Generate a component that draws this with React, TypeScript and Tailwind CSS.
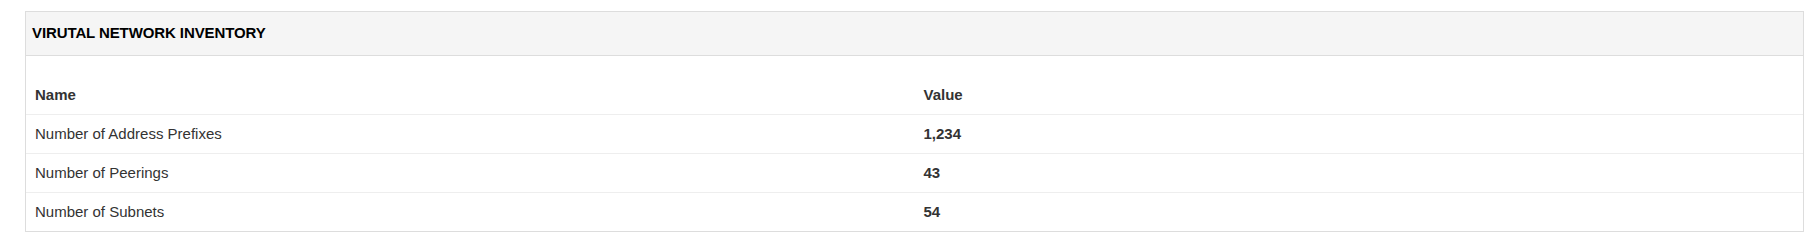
const rows = [
  { name: "Number of Address Prefixes", value: "1,234" },
  { name: "Number of Peerings", value: "43" },
  { name: "Number of Subnets", value: "54" },
];

export default function App() {
  return (
    <div className="min-h-[242px] bg-white pt-[11px] font-['Liberation_Sans',Arial,sans-serif] text-[15px] text-[#333]">
      <div className="ml-[25px] w-[1779px] border border-[#ddd]">
        <div className="flex h-[44px] items-center border-b border-[#ddd] bg-[#f5f5f5] px-[6px]">
          <h3 className="text-[15px] font-bold tracking-[-0.1px] text-black">VIRUTAL NETWORK INVENTORY</h3>
        </div>
        <div className="pt-[20px]">
          <table className="w-full border-collapse">
            <thead>
              <tr>
                <th className="w-1/2 px-[9px] py-[8px] text-left font-bold leading-[22px]">Name</th>
                <th className="w-1/2 px-[9px] py-[8px] text-left font-bold leading-[22px]">Value</th>
              </tr>
            </thead>
            <tbody>
              {rows.map((r) => (
                <tr key={r.name} className="border-t border-[#eee]">
                  <td className="px-[9px] py-[8px] leading-[22px]">{r.name}</td>
                  <td className="px-[9px] py-[8px] font-bold leading-[22px]">{r.value}</td>
                </tr>
              ))}
            </tbody>
          </table>
        </div>
      </div>
    </div>
  );
}
